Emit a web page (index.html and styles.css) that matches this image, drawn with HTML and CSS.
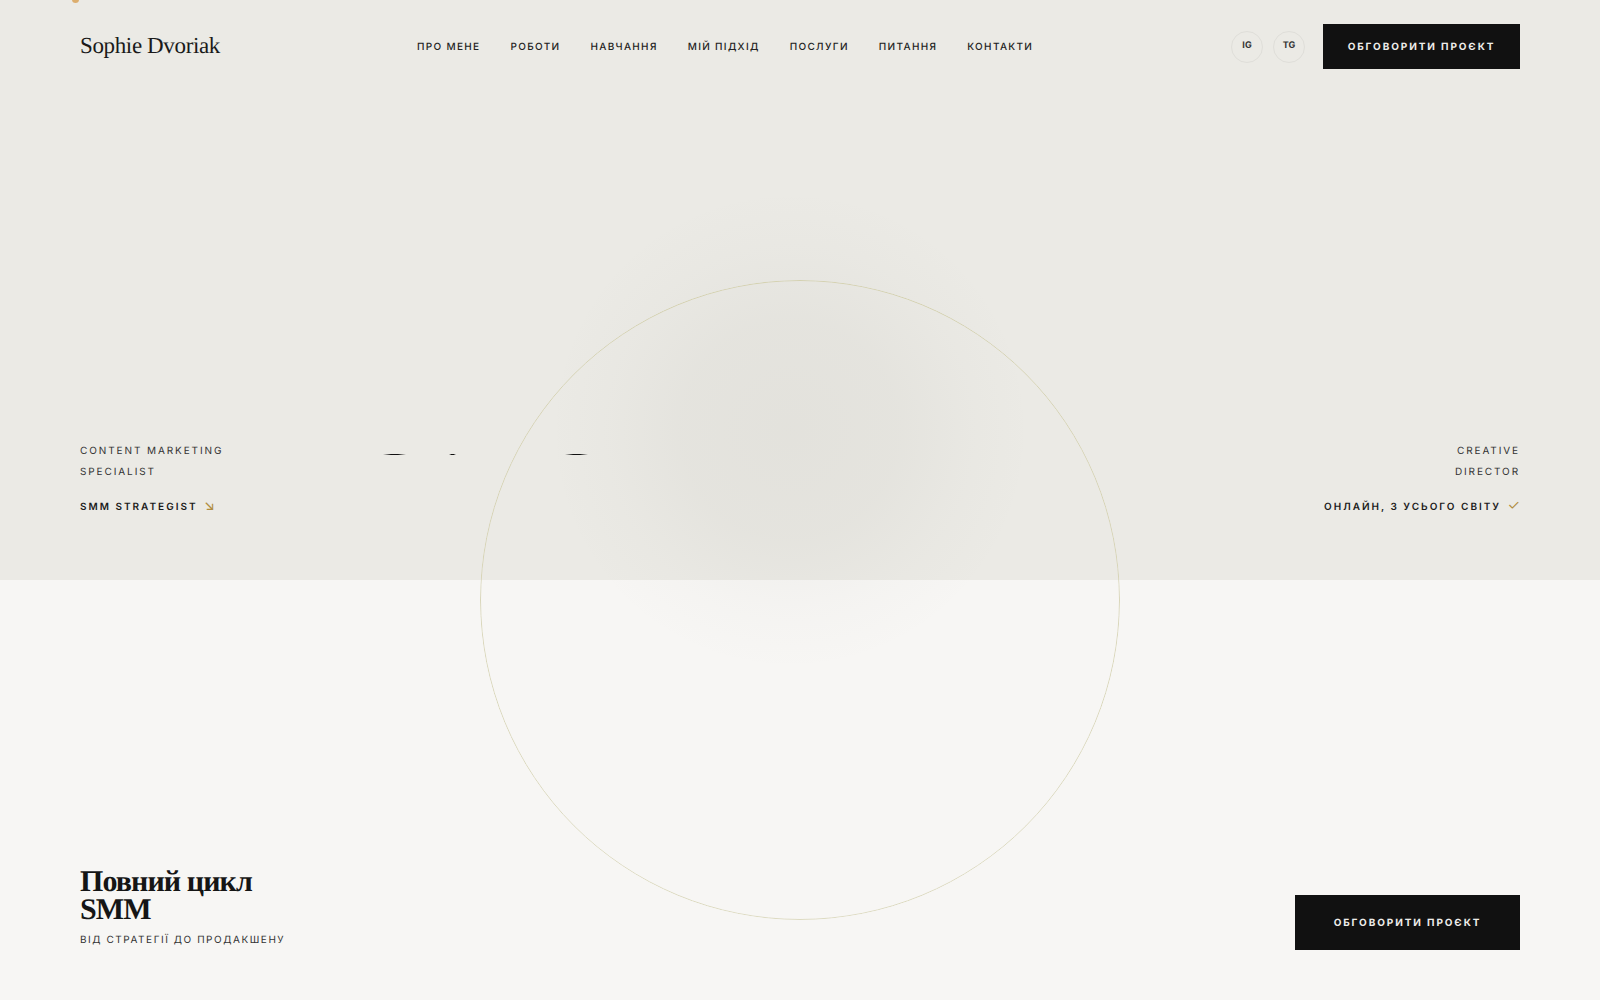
FILE: index.html
```html
<!DOCTYPE html>
<html lang="uk">
<head>
    <meta charset="UTF-8">
    <title>Sophie Dvoriak</title>
    <link rel="stylesheet" href="styles.css">
</head>
<body>
    <div class="page">
        <section class="hero">
            <header class="top">
                <a class="logo" href="#">Sophie Dvoriak</a>
                <nav class="menu">
                    <a href="#">Про мене</a>
                    <a href="#">Роботи</a>
                    <a href="#">Навчання</a>
                    <a href="#">Мій підхід</a>
                    <a href="#">Послуги</a>
                    <a href="#">Питання</a>
                    <a href="#">Контакти</a>
                </nav>
                <div class="topRight">
                    <a class="social" href="#">IG</a>
                    <a class="social" href="#">TG</a>
                    <a class="btn btnTop" href="#">Обговорити проєкт</a>
                </div>
            </header>
            <div class="heroRow">
                <div class="side">
                    <p class="sideText">Content Marketing<br>Specialist</p>
                    <p class="sideStrong">SMM Strategist <span class="gold">↘</span></p>
                </div>
                <!-- заголовок ще захований, видно лише верхівки літер -->
                <div class="titleMask" aria-hidden="true">
                    <i class="sliver sliverOne"></i>
                    <i class="sliver sliverTwo"></i>
                    <i class="sliver sliverThree"></i>
                </div>
                <div class="side sideRight">
                    <p class="sideText">Creative<br>Director</p>
                    <p class="sideStrong">Онлайн, з усього світу <span class="gold">✓</span></p>
                </div>
            </div>
        </section>
        <section class="lower">
            <div>
                <h2 class="lowerTitle">Повний цикл<br>SMM</h2>
                <p class="lowerSub">Від стратегії до продакшену</p>
            </div>
            <a class="btn btnBottom" href="#">Обговорити проєкт</a>
        </section>
        <div class="glow"></div>
        <div class="ring"></div>
        <div class="cursorDot"></div>
    </div>
</body>
</html>
```

FILE: styles.css
```css
* { box-sizing: border-box; }
html, body { margin: 0; padding: 0; }
body {
    font-family: Inter, "Liberation Sans", sans-serif;
    color: #111;
    background: #f7f6f4;
    text-rendering: geometricPrecision;
}
a { color: inherit; text-decoration: none; }
p, h2 { margin: 0; }

.page { position: relative; height: 1000px; overflow: hidden; }

/* 1、上半部分 */
.hero {
    height: 580px;
    padding: 24px 80px 0;
    background-color: #ebeae5;
    display: flex;
    flex-direction: column;
    justify-content: space-between;
}
.top { display: flex; align-items: center; position: relative; z-index: 2; height: 45px; }
.logo {
    width: 337px;
    margin-bottom: 2px;
    font-family: "Liberation Serif", serif;
    font-size: 23px;
    letter-spacing: -0.36px;
    color: #1a1a1a;
}
.menu {
    display: flex;
    gap: 30px;
    font-size: 10px;
    font-weight: 500;
    letter-spacing: 1.33px;
    text-transform: uppercase;
    color: #222;
}
.topRight { margin-left: auto; display: flex; align-items: center; }
.social {
    width: 32px;
    height: 32px;
    margin-right: 10px;
    border: 1px solid #dfded9;
    border-radius: 50%;
    display: flex;
    align-items: center;
    justify-content: center;
    padding-bottom: 2px;
    font-size: 9px;
    font-weight: 700;
    color: #333;
}
.social + .btn { margin-left: 8px; }
.btn {
    display: flex;
    align-items: center;
    justify-content: center;
    background-color: #111;
    color: #eeedea;
    font-size: 10px;
    font-weight: 700;
    letter-spacing: 1.9px;
    text-transform: uppercase;
}
.btnTop { width: 197px; height: 45px; }
.btnBottom { width: 225px; height: 55px; position: relative; z-index: 2; }

.heroRow {
    height: 140px;
    padding-top: 1px;
    display: flex;
    justify-content: space-between;
    position: relative;
    z-index: 2;
}
.side { font-size: 10px; }
.sideRight { text-align: right; }
.sideText { line-height: 21px; letter-spacing: 1.9px; text-transform: uppercase; color: #333; }
.sideStrong {
    margin-top: 14px;
    line-height: 21px;
    font-weight: 600;
    letter-spacing: 2px;
    text-transform: uppercase;
    color: #1a1a1a;
}
.gold { color: #b08d3f; font-size: 14px; line-height: 14px; font-weight: 400; letter-spacing: 0; margin-left: 2px; }

/* 大标题被遮住，只剩一点点 */
.titleMask { position: absolute; left: 303px; top: 14px; width: 205px; height: 1px; display: flex; }
.sliver {
    display: block;
    height: 1px;
    background: linear-gradient(90deg, transparent, #111 35%, #111 65%, transparent);
}
.sliverOne { width: 23px; }
.sliverTwo { width: 7px; margin-left: 43px; }
.sliverThree { width: 23px; margin-left: 109px; }

/* 2、下半部分 */
.lower {
    height: 420px;
    padding: 0 80px 50px;
    display: flex;
    align-items: flex-end;
    justify-content: space-between;
}
.lowerTitle {
    font-family: "Liberation Serif", serif;
    font-size: 30px;
    font-weight: 700;
    line-height: 28px;
    letter-spacing: -0.9px;
    color: #151515;
    position: relative;
    z-index: 2;
}
.lowerSub {
    margin-top: 7px;
    margin-bottom: 1px;
    font-size: 10px;
    line-height: 18px;
    letter-spacing: 1.55px;
    text-transform: uppercase;
    color: #333;
}

/* 3、装饰层 */
.glow {
    position: absolute;
    left: 550px;
    top: 190px;
    width: 480px;
    height: 480px;
    border-radius: 50%;
    background: radial-gradient(closest-side, rgba(120, 118, 105, 0.07) 0%, rgba(120, 118, 105, 0.055) 45%, rgba(120, 118, 105, 0.02) 75%, rgba(120, 118, 105, 0) 100%);
}
.ring {
    position: absolute;
    left: 480px;
    top: 280px;
    width: 640px;
    height: 640px;
    border: 1px solid #d4d1b0;
    border-radius: 50%;
    -webkit-mask-image: linear-gradient(#000, rgba(0, 0, 0, 0.75));
    mask-image: linear-gradient(#000, rgba(0, 0, 0, 0.75));
}
.cursorDot {
    position: absolute;
    left: 72px;
    top: -4px;
    width: 7px;
    height: 7px;
    border-radius: 50%;
    background-color: #dcae6e;
}
```
